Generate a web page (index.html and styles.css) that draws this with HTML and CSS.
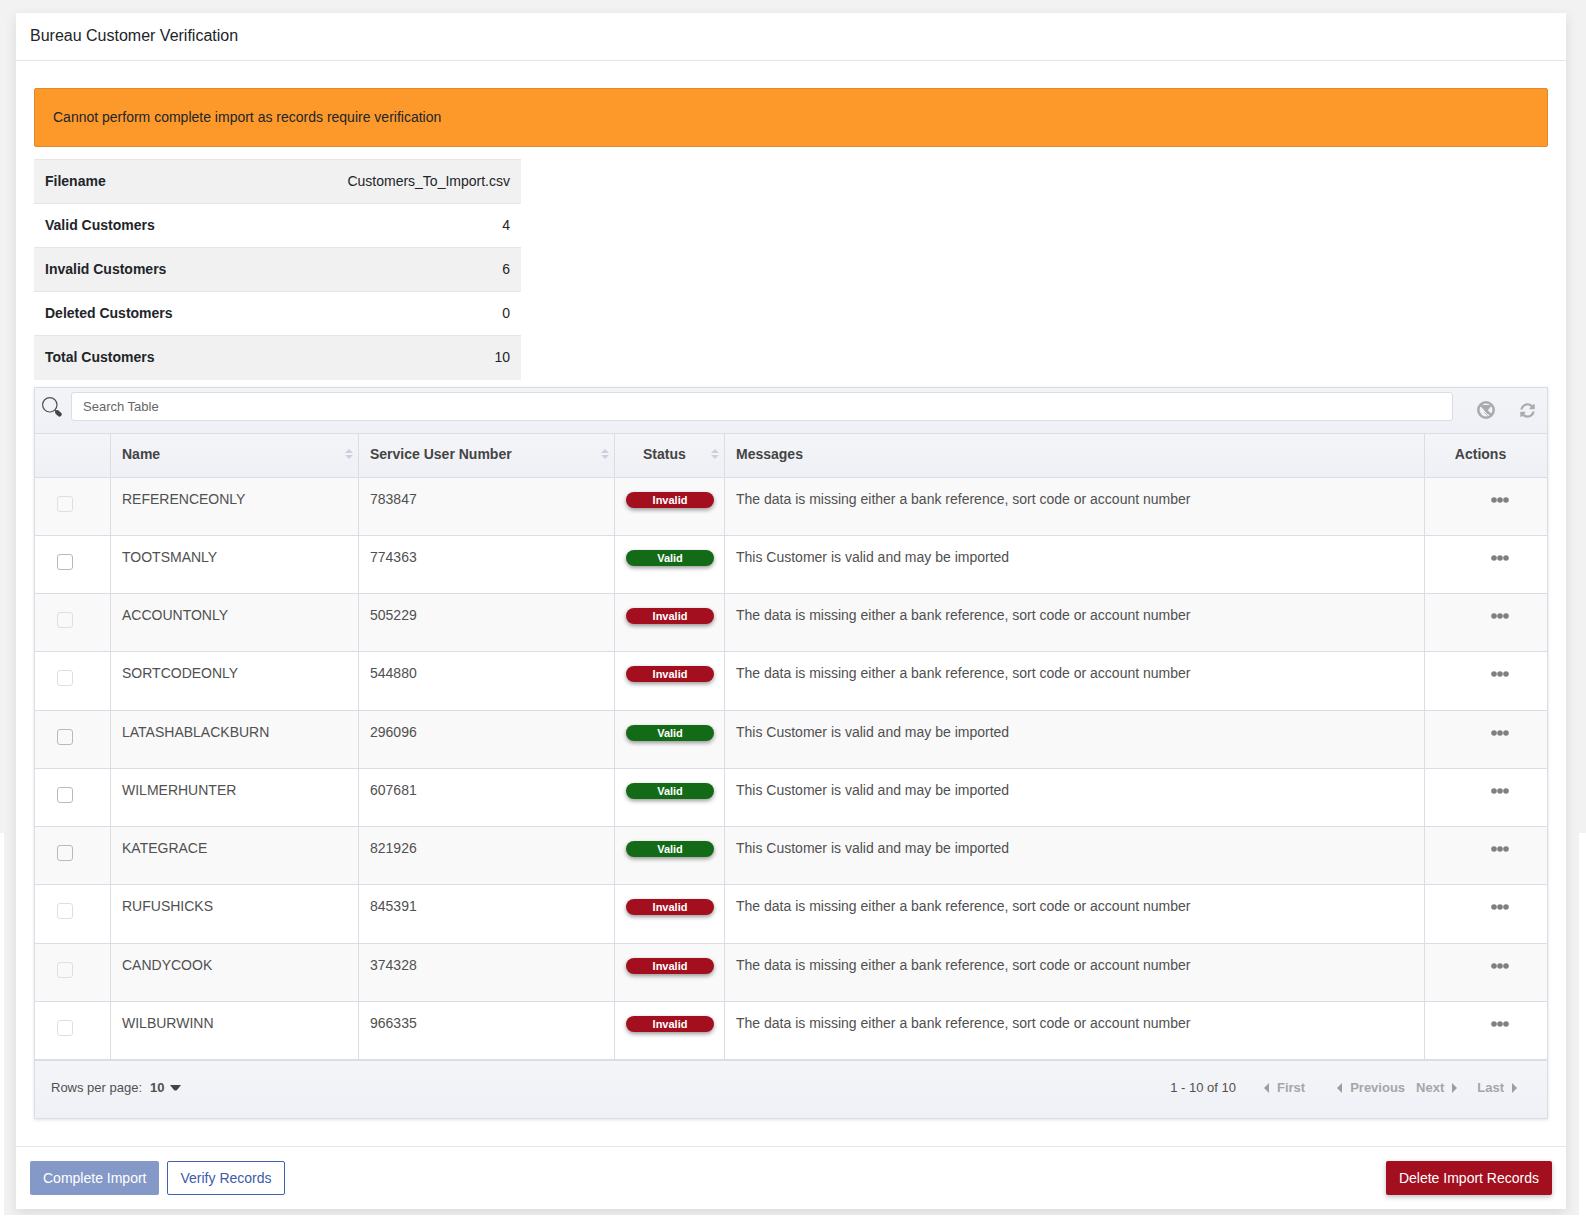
FILE: index.html
```html
<!doctype html>
<html lang="en">
<head>
<meta charset="utf-8">
<title>Bureau Customer Verification</title>
<link rel="stylesheet" href="styles.css">
</head>

<body>
<svg class="sprite" aria-hidden="true">
	<symbol id="sort" viewBox="0 0 8 10"><path d="M4 0l4 4H0zM4 10L0 6h8z"/></symbol>
	<symbol id="dots" viewBox="0 0 18 6"><circle cx="3" cy="3" r="2.8"/><circle cx="9" cy="3" r="2.8"/><circle cx="15" cy="3" r="2.8"/></symbol>
	<symbol id="left" viewBox="0 0 5 10"><path d="M5 0v10L0 5z"/></symbol>
	<symbol id="right" viewBox="0 0 5 10"><path d="M0 0v10l5-5z"/></symbol>
</svg>
<div class="page">
<div class="card">
	<h1 class="card-header">Bureau Customer Verification</h1>
	<div class="card-body">
		<div class="alert" role="alert">Cannot perform complete import as records require verification</div>
		<table class="summary">
			<tr><th scope="row">Filename</th><td>Customers_To_Import.csv</td></tr>
			<tr><th scope="row">Valid Customers</th><td>4</td></tr>
			<tr><th scope="row">Invalid Customers</th><td>6</td></tr>
			<tr><th scope="row">Deleted Customers</th><td>0</td></tr>
			<tr><th scope="row">Total Customers</th><td>10</td></tr>
		</table>

		<div class="grid">
			<div class="toolbar">
				<label for="search" aria-label="Search">
					<svg class="search-icon" width="20" height="20" viewBox="0 0 20 20"><circle cx="7.8" cy="7.8" r="7.2" fill="none" stroke="#505050" stroke-width="1.2"/><path d="M13 13l2 2" stroke="#505050" stroke-width="1.4"/><path d="M15.3 15.3l2.2 2" stroke="#454545" stroke-width="4.4" stroke-linecap="round"/></svg>
				</label>
				<input type="text" id="search" class="search" placeholder="Search Table">
				<button type="button" class="tool" aria-label="Clear filters">
					<svg width="18" height="18" viewBox="0 0 18 18"><circle cx="9" cy="9" r="7.700" fill="none" stroke="#a9abaf" stroke-width="2.6"/><path d="M5 4h10l-4 5v6l-3.500-3V9z" fill="#a9abaf"/><path d="M3 6l9 9" stroke="#f2f3f7" stroke-width="1"/><path d="M3.400 3.600l10.800 10.800" stroke="#a9abaf" stroke-width="2.400"/></svg>
				</button>
				<button type="button" class="tool" aria-label="Refresh">
					<svg width="15" height="15" viewBox="0 0 512 512" fill="#a9abaf"><path d="M370 134c-31-29-71-45-114-45-78 0-145 53-163 127-1 5-6 9-12 9H24c-7 0-13-7-12-14C33 94 135 8 256 8c66 0 126 26 171 68l35-35c15-15 41-4 41 17v134c0 13-11 24-24 24H345c-21 0-32-26-17-41zM32 296h134c21 0 32 26 17 41l-41 41c31 29 71 45 114 45 78 0 145-53 163-127 1-5 6-9 12-9h57c7 0 13 7 12 14-21 117-123 203-244 203-66 0-126-26-171-68l-35 35c-15 15-41 4-41-17V320c0-13 11-24 23-24z"/></svg>
				</button>
			</div>
			<table class="records">
				<colgroup><col class="c-check"><col class="c-name"><col class="c-number"><col class="c-status"><col><col class="c-actions"></colgroup>
				<thead>
					<tr>
						<th></th>
						<th><button type="button" class="sort">Name<svg class="sort-icon"><use href="#sort"/></svg></button></th>
						<th><button type="button" class="sort">Service User Number<svg class="sort-icon"><use href="#sort"/></svg></button></th>
						<th><button type="button" class="sort sort-center">Status<svg class="sort-icon"><use href="#sort"/></svg></button></th>
						<th>Messages</th>
						<th class="actions-head">Actions</th>
					</tr>
				</thead>
				<tbody>
					<tr>
						<td class="check"><input type="checkbox" aria-label="REFERENCEONLY" disabled></td>
						<td>REFERENCEONLY</td>
						<td>783847</td>
						<td class="status"><span class="badge invalid">Invalid</span></td>
						<td>The data is missing either a bank reference, sort code or account number</td>
						<td class="actions"><button type="button" aria-label="Actions"><svg class="dots"><use href="#dots"/></svg></button></td>
					</tr>
					<tr>
						<td class="check"><input type="checkbox" aria-label="TOOTSMANLY"></td>
						<td>TOOTSMANLY</td>
						<td>774363</td>
						<td class="status"><span class="badge valid">Valid</span></td>
						<td>This Customer is valid and may be imported</td>
						<td class="actions"><button type="button" aria-label="Actions"><svg class="dots"><use href="#dots"/></svg></button></td>
					</tr>
					<tr>
						<td class="check"><input type="checkbox" aria-label="ACCOUNTONLY" disabled></td>
						<td>ACCOUNTONLY</td>
						<td>505229</td>
						<td class="status"><span class="badge invalid">Invalid</span></td>
						<td>The data is missing either a bank reference, sort code or account number</td>
						<td class="actions"><button type="button" aria-label="Actions"><svg class="dots"><use href="#dots"/></svg></button></td>
					</tr>
					<tr>
						<td class="check"><input type="checkbox" aria-label="SORTCODEONLY" disabled></td>
						<td>SORTCODEONLY</td>
						<td>544880</td>
						<td class="status"><span class="badge invalid">Invalid</span></td>
						<td>The data is missing either a bank reference, sort code or account number</td>
						<td class="actions"><button type="button" aria-label="Actions"><svg class="dots"><use href="#dots"/></svg></button></td>
					</tr>
					<tr>
						<td class="check"><input type="checkbox" aria-label="LATASHABLACKBURN"></td>
						<td>LATASHABLACKBURN</td>
						<td>296096</td>
						<td class="status"><span class="badge valid">Valid</span></td>
						<td>This Customer is valid and may be imported</td>
						<td class="actions"><button type="button" aria-label="Actions"><svg class="dots"><use href="#dots"/></svg></button></td>
					</tr>
					<tr>
						<td class="check"><input type="checkbox" aria-label="WILMERHUNTER"></td>
						<td>WILMERHUNTER</td>
						<td>607681</td>
						<td class="status"><span class="badge valid">Valid</span></td>
						<td>This Customer is valid and may be imported</td>
						<td class="actions"><button type="button" aria-label="Actions"><svg class="dots"><use href="#dots"/></svg></button></td>
					</tr>
					<tr>
						<td class="check"><input type="checkbox" aria-label="KATEGRACE"></td>
						<td>KATEGRACE</td>
						<td>821926</td>
						<td class="status"><span class="badge valid">Valid</span></td>
						<td>This Customer is valid and may be imported</td>
						<td class="actions"><button type="button" aria-label="Actions"><svg class="dots"><use href="#dots"/></svg></button></td>
					</tr>
					<tr>
						<td class="check"><input type="checkbox" aria-label="RUFUSHICKS" disabled></td>
						<td>RUFUSHICKS</td>
						<td>845391</td>
						<td class="status"><span class="badge invalid">Invalid</span></td>
						<td>The data is missing either a bank reference, sort code or account number</td>
						<td class="actions"><button type="button" aria-label="Actions"><svg class="dots"><use href="#dots"/></svg></button></td>
					</tr>
					<tr>
						<td class="check"><input type="checkbox" aria-label="CANDYCOOK" disabled></td>
						<td>CANDYCOOK</td>
						<td>374328</td>
						<td class="status"><span class="badge invalid">Invalid</span></td>
						<td>The data is missing either a bank reference, sort code or account number</td>
						<td class="actions"><button type="button" aria-label="Actions"><svg class="dots"><use href="#dots"/></svg></button></td>
					</tr>
					<tr>
						<td class="check"><input type="checkbox" aria-label="WILBURWINN" disabled></td>
						<td>WILBURWINN</td>
						<td>966335</td>
						<td class="status"><span class="badge invalid">Invalid</span></td>
						<td>The data is missing either a bank reference, sort code or account number</td>
						<td class="actions"><button type="button" aria-label="Actions"><svg class="dots"><use href="#dots"/></svg></button></td>
					</tr>
				</tbody>
			</table>
			<div class="pager">
				<label for="rows">Rows per page:</label>
				<select id="rows" class="rows"><option>10</option></select>
				<svg class="caret" width="11" height="6" viewBox="0 0 11 6"><path d="M0 0h11L7 5q-1.500 1-3 0z" fill="#444"/></svg>
				<span class="range">1 - 10 of 10</span>
				<button type="button" class="first"><svg class="arrow"><use href="#left"/></svg>First</button>
				<button type="button" class="previous"><svg class="arrow"><use href="#left"/></svg>Previous</button>
				<button type="button" class="next">Next<svg class="arrow"><use href="#right"/></svg></button>
				<button type="button" class="last">Last<svg class="arrow"><use href="#right"/></svg></button>
			</div>
		</div>
	</div>
	<div class="card-footer">
		<button type="button" class="btn primary" disabled>Complete Import</button>
		<button type="button" class="btn outline">Verify Records</button>
		<button type="button" class="btn danger">Delete Import Records</button>
	</div>
</div>
</div>
</body>
</html>
```
FILE: styles.css
```css
*{box-sizing:border-box}
html{background:#fff}
body{margin:0;background:linear-gradient(#f2f2f2,#f2f2f2) no-repeat 0 0/100% 833px;font:14px/20px "Liberation Sans",Arial,sans-serif;color:#212529}
button,input,select{font:inherit;color:inherit;margin:0}
button{background:none;border:0;padding:0;cursor:pointer}
svg{display:block;flex:none}
.sprite{position:absolute;width:0;height:0}
.page{margin:0 7px 0 4px;padding:13px 13px 6px 12px;background:#f2f2f2}

/* card */
.card{background:#fff;box-shadow:0 4px 12px rgba(0,0,0,.1)}
.card-header{margin:0;padding:12px 14px 13px;font-size:16px;font-weight:400;line-height:22px;border-bottom:1px solid #e6e6e6}
.card-body{padding:27px 18px}
.card-footer{display:flex;gap:8px;padding:14px;border-top:1px solid #e6e6e6}
.alert{padding:18px;border:1px solid #e08a26;border-radius:2px;background:#fd992b;line-height:21px}

/* import totals */
.summary{width:487px;max-width:100%;margin:12px 0 7px;border-collapse:collapse}
.summary th,.summary td{height:44px;padding:0 11px 2px;border-top:1px solid #e6e6e6;text-align:left}
.summary td{text-align:right}
.summary tr:nth-child(odd){background:#f1f1f1}

/* records grid */
.grid{border:1px solid #dadce6;box-shadow:0 1px 3px rgba(0,0,0,.12);color:#505050}
.toolbar{display:flex;align-items:center;height:46px;padding:0 12px 0 7px;background:linear-gradient(#f3f4f8,#f0f1f6);border-bottom:1px solid #dadce6}
.search-icon{margin:0 9px 6px 0}
.search{flex:1;min-width:0;height:29px;margin:0 24px 8px 0;padding:0 11px;border:1px solid #dadce6;border-radius:3px;background:#fff;font-size:13px}
.search::placeholder{color:#666;opacity:1}
.tool + .tool{margin-left:25px}
.records{width:100%;table-layout:fixed;border-collapse:separate;border-spacing:0}
.c-check{width:76px}
.c-name{width:248px}
.c-number{width:256px}
.c-status{width:110px}
.c-actions{width:122px}
.records th,.records td{border-right:1px solid #dadce6;border-bottom:1px solid #dadce6;text-align:left}
.records th:last-child,.records td:last-child{border-right:0}
.records th{height:44px;padding:0 11px 2px;background:linear-gradient(#f4f5f8,#eff0f5);color:#444}
.records td{height:58px;padding:11px;vertical-align:top}
.records tr:nth-child(4n) td{height:59px}
.records tbody tr:nth-child(odd){background:#f9f9f9}
.sort{display:flex;align-items:center;justify-content:space-between;width:100%;font-weight:700}
.sort-center{padding-left:17px}
.records th:has(.sort){padding-right:5px}
.sort-icon{width:8px;height:10px;fill:#ced1dd}
.records th.actions-head{padding-right:22px;text-align:center}
.records .check{padding:18px 22px}
.check input{display:block;appearance:none;width:16px;height:16px;border:1px solid #b6bac0;border-radius:3px;background:none}
.check input:disabled{border-color:#dfdfe2}
.records .status{padding-top:14px;padding-right:10px}
.badge{display:block;height:16px;border-radius:8px;color:#fff;font-size:11px;font-weight:700;line-height:16px;text-align:center;box-shadow:0 2px 4px rgba(0,0,0,.4)}
.invalid{background:#a30f1e}
.valid{background:#136b17}
.records .actions{padding:19px 38px 0}
.actions button{display:block;margin-left:auto}
.dots{width:18px;height:6px;fill:#808080}

/* pager */
.pager{display:flex;align-items:center;height:58px;padding:0 30px 3px 16px;border-top:1px solid #dadce6;background:linear-gradient(#f4f5f9,#f0f1f6);font-size:13px}
.rows{appearance:none;margin-left:8px;padding:0;border:0;background:none;font-weight:700}
.caret{margin-left:5px}
.range{margin-left:auto}
.pager button{display:flex;align-items:center;gap:8px;color:#a5a6a9;font-weight:700}
.arrow{width:5px;height:10px;fill:#9c9da1}
.first{margin-left:28px}
.previous{margin-left:32px}
.next{margin-left:11px}
.last{margin-left:20px}

/* buttons */
.btn{height:34px;padding:0 12px;border:1px solid transparent;border-radius:2px}
.primary{background:#8499c8;color:#fff}
.outline{border-color:#4162b0;background:#fff;color:#3d5ba9}
.danger{margin-left:auto;background:#a30f1e;color:#fff;box-shadow:0 2px 5px rgba(0,0,0,.25)}
```
